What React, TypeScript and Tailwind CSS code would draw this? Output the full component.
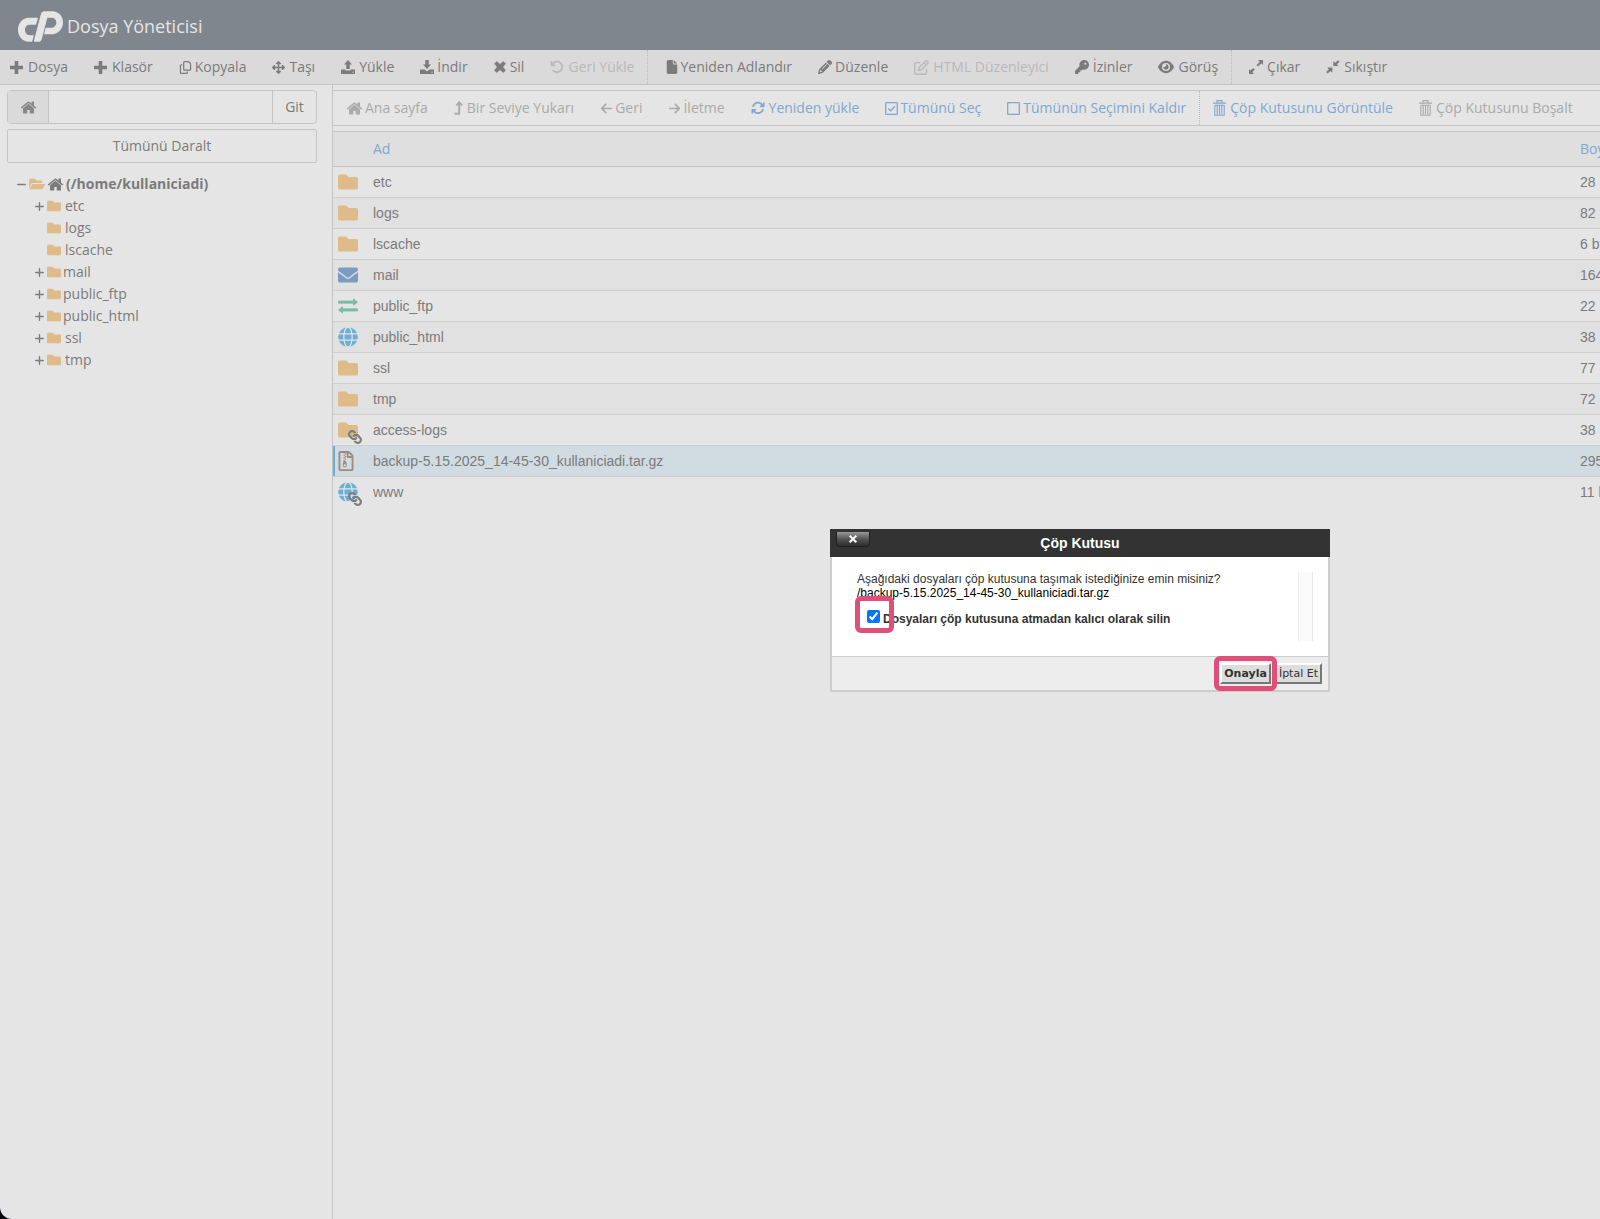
import type { ReactNode } from 'react'
import {
  FaArrowLeft,
  FaArrowRight,
  FaArrowRotateLeft,
  FaArrowsRotate,
  FaEye,
  FaFile,
  FaKey,
  FaMinus,
  FaPencil,
  FaPlus,
  FaRegCopy,
  FaRegPenToSquare,
} from 'react-icons/fa6'
import { FaArrowsAlt, FaEnvelope, FaFolder, FaFolderOpen, FaLink, FaRegFileArchive } from 'react-icons/fa'

type Action = {
  label: string
  icon: ReactNode
  slot?: string
  disabled?: boolean
  divider?: string
}

function HomeIcon({ className }: { className: string }) {
  return (
    <svg viewBox="0 0 1792 1792" fill="currentColor" className={className}>
      <path d="M1472 992v480q0 26-19 45t-45 19h-384v-384h-256v384h-384q-26 0-45-19t-19-45v-480q0-1 .5-3t.5-3l575-474 575 474q1 2 1 6zm223-69l-62 74q-8 9-21 11h-3q-13 0-21-7l-692-577-692 577q-12 8-24 7-13-2-21-11l-62-74q-8-10-7-23.5t11-21.5l719-599q32-26 76-26t76 26l244 204v-195q0-14 9-23t23-9h192q14 0 23 9t9 23v408l219 182q10 8 11 21.5t-7 23.5z" />
    </svg>
  )
}

function AddIcon() {
  return (
    <svg viewBox="0 0 13 13" fill="currentColor" className="size-[13px]">
      <path d="M4.700 0h3.600v4.700H13v3.600H8.300V13H4.700V8.300H0V4.700h4.700z" />
    </svg>
  )
}

function UploadIcon() {
  return (
    <svg viewBox="0 0 14 14" fill="currentColor" className="size-3.5">
      <path d="M7 0l4 4.500H8.700V9H5.300V4.500H3zM0 9.600h4.400v.8h5.200v-.8H14V14H0z" />
      <circle cx="12" cy="12.200" r=".6" fill="#dadada" />
    </svg>
  )
}

function DownloadIcon() {
  return (
    <svg viewBox="0 0 14 14" fill="currentColor" className="size-3.5">
      <path d="M5.300 0h3.400v4.500H11L7 9 3 4.500h2.300zM0 9.600h4.800L7 11.400l2.200-1.800H14V14H0z" />
      <circle cx="12" cy="12.200" r=".6" fill="#dadada" />
    </svg>
  )
}

function CrossIcon() {
  return (
    <svg viewBox="0 0 12 12" fill="currentColor" stroke="currentColor" strokeLinejoin="round" className="size-3">
      <path d="M2.700.6L6 3.400 9.300.6l2.100 2.100L8.600 6l2.800 3.300-2.100 2.100L6 8.600l-3.300 2.800L.6 9.300 3.400 6 .6 2.700z" strokeWidth=".8" />
    </svg>
  )
}

function LevelUpIcon() {
  return (
    <svg viewBox="0 0 9 14" fill="none" stroke="currentColor" className="h-3.5 w-[9px]">
      <path d="M.5 12.8h4.700V2" strokeWidth="2" />
      <path d="M2.200 4.500l3-3.300 3 3.300" strokeWidth="1.800" />
    </svg>
  )
}

function CheckBoxIcon({ checked }: { checked?: boolean }) {
  return (
    <svg viewBox="0 0 13 13" fill="none" stroke="currentColor" className="size-[13px]">
      <rect x=".7" y=".7" width="11.6" height="11.6" rx=".6" strokeWidth="1.300" />
      {checked && <path d="M3.300 6.400l2.300 2.300 4.300-4.500" strokeWidth="1.400" />}
    </svg>
  )
}

function TrashIcon() {
  return (
    <svg viewBox="0 0 13 16" fill="none" stroke="currentColor" className="h-4 w-[13px]">
      <path d="M4 2.600V.7h5v1.900M0 3.100h13" strokeWidth="1.200" />
      <path d="M1.800 5v10.300h9.400V5M4.200 5v9.500M6.500 5v9.500M8.800 5v9.500M1.800 5.200h9.400" strokeWidth="1.100" />
    </svg>
  )
}

function ExpandIcon() {
  return (
    <svg viewBox="0 0 14 14" fill="currentColor" className="size-3.5">
      <path d="M9 0h5v5l-1.700-1.700-3.200 3.200-1.600-1.600 3.200-3.200zM5 14H0V9l1.600 1.600 2.600-2.600 1.600 1.600-2.500 2.700z" />
    </svg>
  )
}

function CompressIcon() {
  return (
    <svg viewBox="0 0 14 14" fill="currentColor" className="size-3.5">
      <path d="M12.200.2l1.400 1.400-2.600 2.700L12.600 6H7.300V.9l1.900 1.900zM1.600 13.400L.2 12l2.700-2.700-1.700-1.700h5.200v5.200l-1.900-1.900z" />
    </svg>
  )
}

function ExchangeIcon() {
  return (
    <svg viewBox="0 0 20 16" fill="currentColor" stroke="currentColor" strokeLinejoin="round" className="h-4 w-5">
      <path d="M15.500.9l4 3.200-4 3.200V5.200H.5V3h15zM4.500 8.700v2.100h15V13h-15v2.100l-4-3.200z" strokeWidth=".8" />
    </svg>
  )
}

function GlobeIcon() {
  return (
    <svg viewBox="0 0 20 20" className="size-5">
      <circle cx="10" cy="10" r="9.800" fill="#6aafd8" />
      <g fill="none" stroke="#e5e5e5" strokeWidth="1.200">
        <ellipse cx="10" cy="10" rx="4.200" ry="9.800" />
        <path d="M0 6.800h20M0 13.200h20" />
      </g>
    </svg>
  )
}

function Logo() {
  return (
    <svg viewBox="0 0 135 92" fill="#e5e5e5" className="h-[31px] w-[45px]">
      <path d="M60 20H33C14 20 0 36 0 56s14 36 33 36h9l6-20H35c-9 0-14-7-14-16s5-15 14-15h19z" />
      <path d="M48 88L69 8q2-8 10-8h24c19 0 32 15 32 33 0 20-15 36-33 36H78l5-19h18c8 0 14-8 14-16s-6-14-14-14H88L71 85q-2 7-9 7H52q-5 0-4-4z" />
    </svg>
  )
}

const toolbar: Action[] = [
  { label: 'Dosya', icon: <AddIcon /> },
  { label: 'Klasör', icon: <AddIcon /> },
  { label: 'Kopyala', icon: <FaRegCopy className="size-[13px]" />, slot: 'w-4' },
  { label: 'Taşı', icon: <FaArrowsAlt className="size-[13px]" />, slot: 'w-[17px]' },
  { label: 'Yükle', icon: <UploadIcon /> },
  { label: 'İndir', icon: <DownloadIcon />, slot: 'w-[17px]' },
  { label: 'Sil', icon: <CrossIcon />, slot: 'w-4' },
  { label: 'Geri Yükle', icon: <FaArrowRotateLeft className="size-3.5" />, disabled: true },
  { label: 'Yeniden Adlandır', icon: <FaFile className="size-3.5" />, slot: 'w-[15px]', divider: 'pl-1' },
  { label: 'Düzenle', icon: <FaPencil className="size-3.5" />, slot: 'w-[17px]' },
  { label: 'HTML Düzenleyici', icon: <FaRegPenToSquare className="size-[15px]" />, slot: 'w-[19px]', disabled: true },
  { label: 'İzinler', icon: <FaKey className="size-3.5" /> },
  { label: 'Görüş', icon: <FaEye className="size-4" />, slot: 'w-5' },
  { label: 'Çıkar', icon: <ExpandIcon />, divider: 'pl-1' },
  { label: 'Sıkıştır', icon: <CompressIcon /> },
]

const actions: Action[] = [
  { label: 'Ana sayfa', icon: <HomeIcon className="size-[17px]" />, slot: 'w-[19px]', disabled: true },
  { label: 'Bir Seviye Yukarı', icon: <LevelUpIcon />, slot: 'w-[13px]', disabled: true },
  { label: 'Geri', icon: <FaArrowLeft className="size-[13px]" />, slot: 'w-[15px]', disabled: true },
  { label: 'İletme', icon: <FaArrowRight className="size-[13px]" />, slot: 'w-[15px]', disabled: true },
  { label: 'Yeniden yükle', icon: <FaArrowsRotate className="size-3.5" /> },
  { label: 'Tümünü Seç', icon: <CheckBoxIcon checked />, slot: 'w-[15px]' },
  { label: 'Tümünün Seçimini Kaldır', icon: <CheckBoxIcon />, slot: 'w-4' },
  { label: 'Çöp Kutusunu Görüntüle', icon: <TrashIcon />, slot: 'w-[17px]', divider: 'pl-0' },
  { label: 'Çöp Kutusunu Boşalt', icon: <TrashIcon />, slot: 'w-[17px]', disabled: true },
]

const tree = [
  { name: 'etc', expandable: true },
  { name: 'logs' },
  { name: 'lscache' },
  { name: 'mail', expandable: true, special: true },
  { name: 'public_ftp', expandable: true, special: true },
  { name: 'public_html', expandable: true, special: true },
  { name: 'ssl', expandable: true },
  { name: 'tmp', expandable: true },
]

const files = [
  { name: 'etc', kind: 'folder', size: '28 bytes' },
  { name: 'logs', kind: 'folder', size: '82 bytes' },
  { name: 'lscache', kind: 'folder', size: '6 bytes' },
  { name: 'mail', kind: 'mail', size: '164 bytes' },
  { name: 'public_ftp', kind: 'ftp', size: '22 bytes' },
  { name: 'public_html', kind: 'web', size: '38 bytes' },
  { name: 'ssl', kind: 'folder', size: '77 bytes' },
  { name: 'tmp', kind: 'folder', size: '72 bytes' },
  { name: 'access-logs', kind: 'folder', size: '38 bytes', link: true },
  { name: 'backup-5.15.2025_14-45-30_kullaniciadi.tar.gz', kind: 'archive', size: '295,5 KB', selected: true },
  { name: 'www', kind: 'web', size: '11 bytes', link: true },
]

function FileIcon({ kind, link }: { kind: string; link?: boolean }) {
  return (
    <span className="relative flex h-5 w-5 items-center">
      {kind === 'folder' && <FaFolder className="size-5 text-[#debb88]" />}
      {kind === 'mail' && <FaEnvelope className="size-5 text-[#7b9bc0]" />}
      {kind === 'ftp' && <ExchangeIcon />}
      {kind === 'web' && <GlobeIcon />}
      {kind === 'archive' && <FaRegFileArchive className="-ml-0.5 size-5 text-[#a08a7a]" />}
      {link && <FaLink className="absolute -right-1 -bottom-1 size-3.5 rotate-90 text-[#7d7d7d]" />}
    </span>
  )
}

function ActionItem({ item, tone, muted }: { item: Action; tone: string; muted: string }) {
  return (
    <li className={item.divider ? `flex border-l border-dotted border-[#bbb] ${item.divider}` : 'flex'}>
      <button
        type="button"
        disabled={item.disabled}
        className={`flex items-center px-[13px] text-sm whitespace-nowrap ${item.disabled ? muted : tone}`}
      >
        <span className={`flex shrink-0 items-center ${item.slot ?? 'w-[18px]'}`}>{item.icon}</span>
        {item.label}
      </button>
    </li>
  )
}

function Sidebar() {
  return (
    <aside className="w-[332px] shrink-0 pt-[5px] pr-[15px] pl-[7px] text-sm">
      <form className="flex h-[34px] rounded-sm border border-[#c4c4c4]">
        <button
          type="button"
          aria-label="Ana sayfa"
          className="flex w-[41px] items-center justify-center border-r border-[#c4c4c4] bg-[#dadada] text-[#888]"
        >
          <HomeIcon className="size-[17px]" />
        </button>
        <input type="text" aria-label="Yol" className="min-w-0 flex-1 bg-transparent px-3 outline-none" />
        <button type="button" className="w-11 border-l border-[#c4c4c4]">
          Git
        </button>
      </form>
      <button type="button" className="mt-[5px] h-[34px] w-full rounded-xs border border-[#c4c4c4]">
        Tümünü Daralt
      </button>
      <div className="mt-[10px] ml-[9px] flex h-[22px] items-center font-bold">
        <FaMinus className="size-[11px]" />
        <FaFolderOpen className="ml-0.5 size-4 text-[#debb88]" />
        <HomeIcon className="ml-0.5 size-[17px]" />
        <span className="ml-0.5">(/home/kullaniciadi)</span>
      </div>
      <ul className="ml-[27px]">
        {tree.map((node) => (
          <li key={node.name} className="flex h-[22px] items-center">
            <span className="w-[13px]">{node.expandable && <FaPlus className="size-[11px]" />}</span>
            <FaFolder className="size-3.5 text-[#debb88]" />
            <a href="#" className={node.special ? 'ml-0.5' : 'ml-1'}>
              {node.name}
            </a>
          </li>
        ))}
      </ul>
    </aside>
  )
}

function FileTable() {
  return (
    <table className="mt-[5px] w-full table-fixed border-collapse text-left font-['Liberation_Sans',Arial,sans-serif] text-sm">
      <thead>
        <tr className="h-[35px] border-y border-[#c4c4c4] bg-[#dfdfdf] text-[#7fa8d0]">
          <th className="w-10" aria-label="Tür" />
          <th className="font-['Open_Sans',sans-serif] font-normal">Ad</th>
          <th className="w-[120px] font-['Open_Sans',sans-serif] font-normal">Boyut</th>
        </tr>
      </thead>
      <tbody>
        {files.map((file) => (
          <tr
            key={file.name}
            className={`h-[31px] border-b border-[#cfcfcf] last:border-b-0 ${
              file.selected ? 'bg-[#d0dce2] shadow-[inset_2px_0_0_#6aafd8]' : 'odd:bg-[#e5e5e5] even:bg-[#e1e1e1]'
            }`}
          >
            <td className="pl-[5px] text-[#7dbaa4]">
              <FileIcon kind={file.kind} link={file.link} />
            </td>
            <td>{file.name}</td>
            <td className="whitespace-nowrap">{file.size}</td>
          </tr>
        ))}
      </tbody>
    </table>
  )
}

function Highlight({ className }: { className: string }) {
  return <span className={`pointer-events-none absolute rounded-md border-5 border-[#de5079] ${className}`} />
}

function TrashDialog() {
  return (
    <div
      role="dialog"
      aria-labelledby="trash-title"
      className="absolute top-[529px] left-[830px] w-[500px] font-['Liberation_Sans',Arial,sans-serif] text-xs text-[#333]"
    >
      <div className="relative flex h-7 items-center justify-center bg-[#333]">
        <button
          type="button"
          aria-label="Kapat"
          className="absolute top-[3px] left-1.5 flex h-[15px] w-[34px] items-center justify-center rounded-b-sm border border-t-0 border-[#1c2226] bg-linear-to-b from-[#999] via-[#555] to-[#2c2c2c] text-white"
        >
          <svg viewBox="0 0 8 8" stroke="currentColor" strokeWidth="2" className="size-2">
            <path d="M.7.7l6.600 6.600M7.300.7L.7 7.300" />
          </svg>
        </button>
        <h2 id="trash-title" className="text-sm font-bold text-white">
          Çöp Kutusu
        </h2>
      </div>
      <div className="border-x-2 border-b-2 border-[#ccc] bg-white">
        <div className="flex h-[99px] justify-between pt-[15px] pr-[15px] pb-[15px] pl-[25px]">
          <div className="leading-[14px]">
            <p>Aşağıdaki dosyaları çöp kutusuna taşımak istediğinize emin misiniz?</p>
            <p className="text-black">/backup-5.15.2025_14-45-30_kullaniciadi.tar.gz</p>
            <div className="relative mt-2.5 flex items-start pl-2.5 font-bold">
              <input id="skip-trash" type="checkbox" defaultChecked className="mr-[3px] size-[13px] accent-[#0075ff]" />
              <label htmlFor="skip-trash" className="pt-0.5">
                Dosyaları çöp kutusuna atmadan kalıcı olarak silin
              </label>
              <Highlight className="-top-3.5 -left-0.5 h-[37px] w-[39px]" />
            </div>
          </div>
          <div className="w-[15px] border-x border-[#e8e8e8] bg-[#fafafa]" />
        </div>
        <div className="flex h-[34px] items-center justify-end gap-1 border-t border-[#ccc] bg-[#ededed] pr-1.5 font-['DejaVu_Sans',sans-serif] text-[11px]">
          <button
            type="button"
            className="relative h-[21px] border-2 border-t-white border-r-[#777] border-b-[#777] border-l-white bg-[#ddd] px-0.5 leading-[18px] font-bold"
          >
            Onayla
            <Highlight className="-inset-x-2 -inset-y-[9px]" />
          </button>
          <button
            type="button"
            className="h-[21px] border-2 border-t-white border-r-[#777] border-b-[#777] border-l-white bg-[#ddd] px-0.5 leading-[18px]"
          >
            İptal Et
          </button>
        </div>
      </div>
    </div>
  )
}

export default function App() {
  return (
    <div className="bg-[#05060f]">
      <div className="relative flex min-h-screen flex-col overflow-hidden rounded-bl-xl bg-[#e5e5e5] font-['Open_Sans',sans-serif] text-[#7b7b7b]">
        <header className="flex h-[50px] items-center gap-1 bg-[#80868d] pt-[3px] pl-[18px] text-[#e5e5e5]">
          <Logo />
          <h1 className="pb-0.5 text-lg">Dosya Yöneticisi</h1>
        </header>
        <ul className="flex h-[35px] border-b border-[#c4c4c4] bg-[#dadada]">
          <li className="-ml-[3px]" />
          {toolbar.map((item) => (
            <ActionItem key={item.label} item={item} tone="text-[#7b7b7b]" muted="text-[#b9b9b9]" />
          ))}
        </ul>
        <div className="flex flex-1">
          <Sidebar />
          <main className="min-w-0 flex-1 overflow-hidden border-l border-[#c4c4c4]">
            <div className="-mr-[100px]">
              <ul className="mt-[5px] flex h-9 border-y border-[#c4c4c4]">
                {actions.map((item) => (
                  <ActionItem key={item.label} item={item} tone="text-[#7fa8d0]" muted="text-[#aaa]" />
                ))}
              </ul>
              <FileTable />
            </div>
          </main>
        </div>
        <TrashDialog />
      </div>
    </div>
  )
}
